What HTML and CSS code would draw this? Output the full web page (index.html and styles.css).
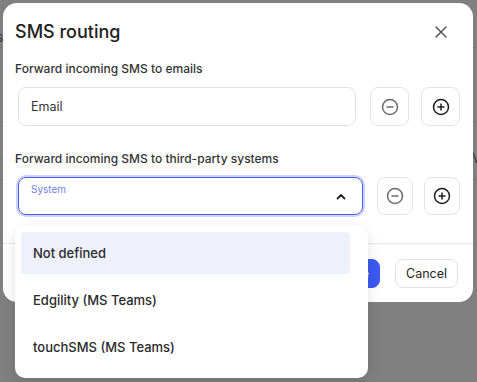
FILE: index.html
```html
<!DOCTYPE html>
<html lang="en">
<head>
<meta charset="UTF-8">
<title>SMS routing</title>
<link rel="stylesheet" href="styles.css">
</head>
<body>
<div class="page">
	<div class="page-row r1"><span class="page-text">s</span></div>
	<div class="page-row r2"></div>
	<div class="page-row r3"><span class="page-text right">M</span></div>
	<div class="page-row r4"></div>
</div>

<div class="modal">
	<div class="modal-head">
		<h1 class="modal-title">SMS routing</h1>
		<svg class="close" width="14" height="14" viewBox="0 0 14 14"><path d="M2 2L12 12M12 2L2 12" stroke="#555" stroke-width="1.5" stroke-linecap="round"/></svg>
	</div>

	<div class="modal-body">
		<div class="label">Forward incoming SMS to emails</div>
		<div class="row">
			<div class="field">Email</div>
			<div class="icon-btn">
				<svg width="18" height="18" viewBox="0 0 18 18"><circle cx="9" cy="9" r="7.5" fill="none" stroke="#6b6b6b" stroke-width="1.5"/><path d="M5.5 9H12.5" stroke="#6b6b6b" stroke-width="1.5"/></svg>
			</div>
			<div class="icon-btn">
				<svg width="18" height="18" viewBox="0 0 18 18"><circle cx="9" cy="9" r="7.5" fill="none" stroke="#1e1e1e" stroke-width="1.5"/><path d="M5.5 9H12.5M9 5.5V12.5" stroke="#1e1e1e" stroke-width="1.5"/></svg>
			</div>
		</div>

		<div class="label second">Forward incoming SMS to third-party systems</div>
		<div class="row">
			<div class="select">
				<span class="select-label">System</span>
				<svg class="chevron" width="10" height="7" viewBox="0 0 10 7"><path d="M1.5 5.5L5 2L8.5 5.5" fill="none" stroke="#222" stroke-width="1.8" stroke-linecap="round" stroke-linejoin="round"/></svg>
			</div>
			<div class="icon-btn small">
				<svg width="18" height="18" viewBox="0 0 18 18"><circle cx="9" cy="9" r="7.5" fill="none" stroke="#6b6b6b" stroke-width="1.5"/><path d="M5.5 9H12.5" stroke="#6b6b6b" stroke-width="1.5"/></svg>
			</div>
			<div class="icon-btn small">
				<svg width="18" height="18" viewBox="0 0 18 18"><circle cx="9" cy="9" r="7.5" fill="none" stroke="#1e1e1e" stroke-width="1.5"/><path d="M5.5 9H12.5M9 5.5V12.5" stroke="#1e1e1e" stroke-width="1.5"/></svg>
			</div>
		</div>
	</div>

	<div class="modal-foot">
		<div class="btn primary">Save</div>
		<div class="btn">Cancel</div>
	</div>
</div>

<div class="menu">
	<div class="menu-item active">Not defined</div>
	<div class="menu-item">Edgility (MS Teams)</div>
	<div class="menu-item">touchSMS (MS Teams)</div>
</div>
</body>
</html>
```

FILE: styles.css
```css
*{
	margin: 0;
	padding: 0;
	box-sizing: border-box;
}
html,body{
	width: 100%;
	height: 100%;
}
body{
	background-color: #808080;
	font-family: Inter, "Liberation Sans", sans-serif;
	color: #242424;
	overflow: hidden;
	position: relative;
}

/* page behind the overlay */
.page-row{
	border-bottom: 1px solid #747474;
	position: relative;
}
.r1{ height: 48px; }
.r2{ height: 74px; }
.r3{ height: 36px; }
.r4{ height: 22px; }
.page-text{
	position: absolute;
	left: -4px;
	top: 28px;
	font-size: 14px;
	color: #3a3a3a;
}
.page-text.right{
	left: auto;
	right: -6px;
	top: 27px;
}

/* modal */
.modal{
	position: absolute;
	left: 3px;
	top: 3px;
	width: 470px;
	height: 299px;
	background: #fff;
	border-radius: 14px;
}
.modal-head{
	display: flex;
	justify-content: space-between;
	align-items: center;
	padding: 17px 25px 0 12px;
}
.modal-title{
	font-size: 18px;
	font-weight: 500;
	line-height: 24px;
	color: #222;
}
.modal-body{
	padding: 0 13px 0 12px;
}
.label{
	font-size: 12px;
	font-weight: 500;
	line-height: 18px;
	color: #333;
	margin-top: 16px;
}
.label.second{
	margin-top: 24px;
}
.row{
	display: flex;
	align-items: center;
	margin-top: 9px;
	padding-left: 3px;
}
.field{
	width: 339px;
	height: 39px;
	border: 1px solid #e2e2e2;
	border-radius: 8px;
	font-size: 12.5px;
	line-height: 37px;
	padding-left: 12px;
	color: #333;
}
.icon-btn{
	width: 39px;
	height: 39px;
	border: 1px solid #e4e4e4;
	border-radius: 8px;
	display: flex;
	align-items: center;
	justify-content: center;
	margin-left: 12px;
}
.field + .icon-btn{
	margin-left: 14px;
}
.icon-btn.small{
	width: 36px;
	height: 38px;
	margin-left: 11px;
}
.select + .icon-btn{
	margin-left: 14px;
}
.select{
	width: 346px;
	height: 38px;
	border: 1.5px solid #4a5cf0;
	border-radius: 8px;
	box-shadow: 0 0 0 2px #cdd3fb;
	position: relative;
}
.select-label{
	position: absolute;
	left: 12px;
	top: 5px;
	font-size: 10px;
	color: #6f80f2;
}
.chevron{
	position: absolute;
	right: 16px;
	top: 15px;
}

.modal-foot{
	position: absolute;
	left: 0;
	right: 0;
	top: 240px;
	border-top: 1px solid #e8e8e8;
	display: flex;
	justify-content: flex-end;
	gap: 15px;
	padding: 15px 15px 0 0;
}
.btn{
	height: 29px;
	border: 1px solid #e2e2e2;
	border-radius: 8px;
	font-size: 12.5px;
	line-height: 27px;
	padding: 0 10px;
	color: #222;
}
.btn.primary{
	background: #3d5af1;
	border-color: #3d5af1;
	color: #fff;
	font-weight: 500;
}

/* dropdown over the modal */
.menu{
	position: absolute;
	left: 15px;
	top: 226px;
	width: 353px;
	height: 152px;
	background: #fff;
	border-radius: 10px;
	box-shadow: 0 4px 14px rgba(0,0,0,0.12);
	padding: 6px 18px 0 6px;
}
.menu-item{
	height: 42px;
	line-height: 42px;
	padding-left: 12px;
	font-size: 13px;
	font-weight: 500;
	color: #2a2a2a;
	border-radius: 4px;
	margin-bottom: 5px;
}
.menu-item.active{
	background: #eef0fc;
}
```
